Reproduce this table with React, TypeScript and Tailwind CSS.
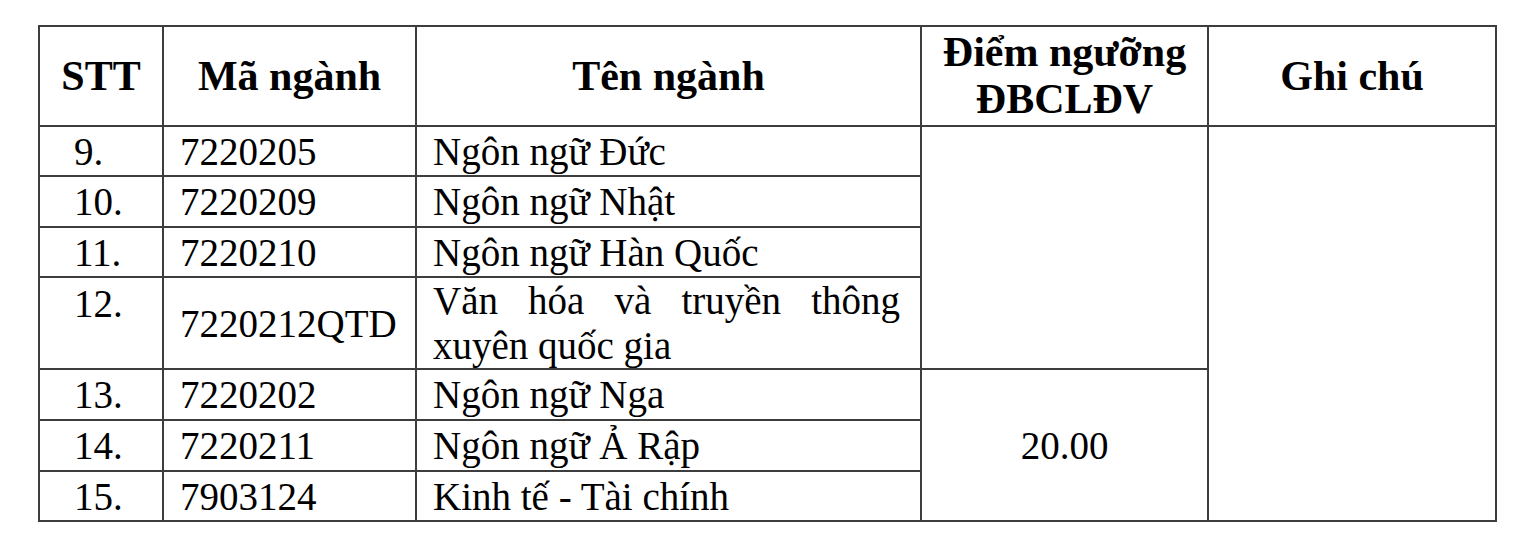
export default function App() {
  const cell = "border-2 border-[#3d3d3d] px-[16px]";
  return (
    <div className="min-h-[551px] bg-white pl-[38px] pt-[25px] text-black font-['Liberation_Serif','Times_New_Roman',serif]">
      <table className="w-[1457px] table-fixed border-collapse">
        <colgroup>
          <col className="w-[124px]" />
          <col className="w-[253px]" />
          <col className="w-[505px]" />
          <col className="w-[287px]" />
          <col className="w-[288px]" />
        </colgroup>
        <thead>
          <tr className="h-[100px] text-[42px] font-bold leading-[47px]">
            <th className={`${cell} text-center`}>STT</th>
            <th className={`${cell} text-center`}>Mã ngành</th>
            <th className={`${cell} text-center`}>Tên ngành</th>
            <th className={`${cell} px-0 text-center`}>
              Điểm ngưỡng
              <br />
              ĐBCLĐV
            </th>
            <th className={`${cell} text-center`}>Ghi chú</th>
          </tr>
        </thead>
        <tbody className="text-[39px] leading-[45px]">
          <tr className="h-[50px]">
            <td className={`${cell} pl-[34px]`}>9.</td>
            <td className={cell}>7220205</td>
            <td className={cell}>Ngôn ngữ Đức</td>
            <td className={cell} rowSpan={4}></td>
            <td className={cell} rowSpan={7}></td>
          </tr>
          <tr className="h-[51px]">
            <td className={`${cell} pl-[34px]`}>10.</td>
            <td className={cell}>7220209</td>
            <td className={cell}>Ngôn ngữ Nhật</td>
          </tr>
          <tr className="h-[50px]">
            <td className={`${cell} pl-[34px]`}>11.</td>
            <td className={cell}>7220210</td>
            <td className={cell}>Ngôn ngữ Hàn Quốc</td>
          </tr>
          <tr className="h-[92px]">
            <td className={`${cell} pl-[34px] pt-[3px] align-top`}>12.</td>
            <td className={cell}>7220212QTD</td>
            <td className={`${cell} pr-[20px] text-justify`}>
              Văn hóa và truyền thông xuyên quốc gia
            </td>
          </tr>
          <tr className="h-[51px]">
            <td className={`${cell} pl-[34px]`}>13.</td>
            <td className={cell}>7220202</td>
            <td className={cell}>Ngôn ngữ Nga</td>
            <td className={`${cell} text-center`} rowSpan={3}>
              20.00
            </td>
          </tr>
          <tr className="h-[51px]">
            <td className={`${cell} pl-[34px]`}>14.</td>
            <td className={cell}>7220211</td>
            <td className={cell}>Ngôn ngữ Ả Rập</td>
          </tr>
          <tr className="h-[50px]">
            <td className={`${cell} pl-[34px]`}>15.</td>
            <td className={cell}>7903124</td>
            <td className={cell}>Kinh tế - Tài chính</td>
          </tr>
        </tbody>
      </table>
    </div>
  );
}
